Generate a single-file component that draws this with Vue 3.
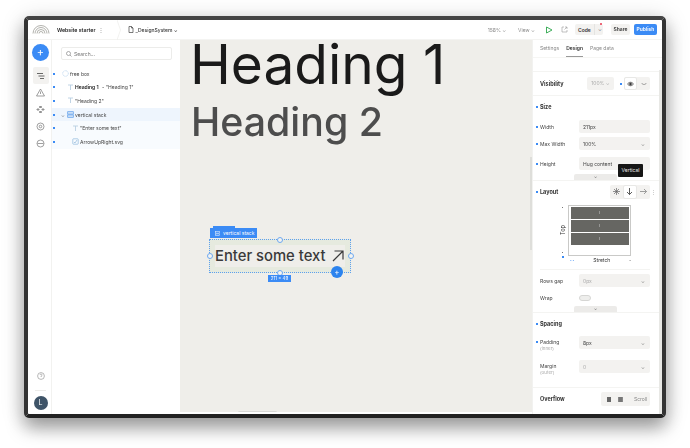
<script setup>
const tree = [
  { cls: 'l0', icon: 'circle', html: 'free box' },
  { cls: 'l1', icon: 't', strong: 'Heading 1', text: ' - "Heading 1"' },
  { cls: 'l1', icon: 't', text: '"Heading 2"' },
  { cls: 'l1 sel', icon: 'stack', text: 'vertical stack', caret: true },
  { cls: 'l2 child', icon: 't', text: '"Enter some text"' },
  { cls: 'l2 child', icon: 'svg', text: 'ArrowUpRight.svg' }
]
</script>

<template>
  <div class="page">
    <div class="window">
      <header class="topbar">
        <svg class="logo" width="18" height="10" viewBox="0 0 18 10" fill="none" stroke="#a9a9a4" stroke-width=".9">
          <path d="M1 9.500a8 8 0 0 1 16 0M3 9.500a6 6 0 0 1 12 0M5 9.500a4 4 0 0 1 8 0M7 9.500a2 2 0 0 1 4 0" />
        </svg>
        <span class="project">Website starter</span>
        <span class="dots">⋮</span>
        <svg class="chev" width="4" height="20" viewBox="0 0 4 20" fill="none" stroke="#ececea" stroke-width=".7"><path d="M0 0l3.500 10L0 20" /></svg>
        <svg class="file" width="6" height="7" viewBox="0 0 6 7" fill="none" stroke="#444" stroke-width=".7"><path d="M1 .5h2.500L5 2v4.500H1zM3.500.5V2H5" /></svg>
        <span class="page-name">_DesignSystem ⌄</span>
        <span class="grow"></span>
        <span class="muted">158% ⌄</span>
        <span class="muted view">View ⌄</span>
        <svg class="play" width="8" height="8" viewBox="0 0 8 8" fill="none" stroke="#3fae5b" stroke-width="1"><path d="M1.500 1v6L7 4z" /></svg>
        <svg class="ext" width="7" height="7" viewBox="0 0 7 7" fill="none" stroke="#999" stroke-width=".6"><path d="M3 1H1v5h5V4M4 1h2v2M6 1L3.500 3.500" /></svg>
        <span class="code"><b>Code</b><i>⌄</i><em></em></span>
        <span class="btn">Share</span>
        <span class="btn publish">Publish</span>
      </header>

      <div class="body">
        <nav class="rail">
          <span class="add">+</span>
          <span class="rail-btn on">
            <svg width="8" height="8" viewBox="0 0 8 8" stroke="#444" stroke-width=".8"><path d="M0 1.500h6M1.500 4h6M3 6.500h4" /></svg>
          </span>
          <span class="rail-btn">
            <svg width="9" height="9" viewBox="0 0 9 9" fill="none" stroke="#777" stroke-width=".7"><path d="M4.500 1L8.500 8h-8zM4.500 3.500v2.500" /></svg>
          </span>
          <span class="rail-btn">
            <svg width="9" height="9" viewBox="0 0 9 9" fill="none" stroke="#777" stroke-width=".8"><path d="M3.500 1.500h2v1h-2zM1 4h2v1H1zM6 4h2v1H6zM3.500 6.500h2v1h-2z" /></svg>
          </span>
          <span class="rail-btn">
            <svg width="9" height="9" viewBox="0 0 9 9" fill="none" stroke="#777" stroke-width=".7"><circle cx="4.500" cy="4.500" r="3.500" /><circle cx="4.500" cy="4.500" r="1.300" /></svg>
          </span>
          <span class="rail-btn">
            <svg width="9" height="9" viewBox="0 0 9 9" fill="none" stroke="#777" stroke-width=".7"><circle cx="4.500" cy="4.500" r="3.500" /><path d="M1.500 4.500h6" /></svg>
          </span>
          <span class="grow"></span>
          <svg class="help" width="8" height="8" viewBox="0 0 8 8" fill="none" stroke="#999" stroke-width=".7"><circle cx="4" cy="4" r="3.400" /><path d="M3 3a1 1 0 1 1 1.300 1L4 5" /></svg>
          <span class="rail-sep"></span>
          <span class="avatar">L</span>
        </nav>

        <aside class="tree">
          <div class="search">
            <svg width="6" height="6" viewBox="0 0 6 6" fill="none" stroke="#888" stroke-width=".7"><circle cx="2.500" cy="2.500" r="2" /><path d="M4 4l1.500 1.500" /></svg>
            <span>Search...</span>
          </div>
          <div class="rows">
            <div v-for="row in tree" :key="row.text || row.html" class="row" :class="row.cls">
              <span class="mark"></span>
              <span v-if="row.caret" class="caret">⌄</span>
              <svg v-if="row.icon === 'circle'" class="ic" width="7" height="7" viewBox="0 0 7 7" fill="none" stroke="#b7d4ef" stroke-width=".8" stroke-dasharray="1 .5"><circle cx="3.500" cy="3.500" r="2.800" /></svg>
              <svg v-else-if="row.icon === 't'" class="ic" width="7" height="7" viewBox="0 0 7 7" fill="none" stroke="#b9cfe2" stroke-width=".9"><path d="M1 1h5M3.500 1v5" /></svg>
              <svg v-else-if="row.icon === 'stack'" class="ic" width="7" height="7" viewBox="0 0 7 7" fill="#cfe2f7" stroke="#5a9bea" stroke-width=".7"><rect x=".7" y=".7" width="5.600" height="2.400" /><rect x=".7" y="3.900" width="5.600" height="2.400" /></svg>
              <svg v-else class="ic" width="7" height="7" viewBox="0 0 7 7" fill="none" stroke="#8fb8dc" stroke-width=".7"><rect x=".8" y=".8" width="5.400" height="5.400" rx=".6" /><path d="M2 4l1 1 2-3" /></svg>
              <span class="label"><b v-if="row.strong">{{ row.strong }}</b>{{ row.text || row.html }}</span>
            </div>
          </div>
        </aside>

        <main class="canvas">
          <div class="h1">Heading 1</div>
          <div class="h2">Heading 2</div>

          <div class="stack">
            <div class="stack-tab"></div>
            <div class="stack-tag">
              <svg width="5" height="5" viewBox="0 0 5 5" fill="none" stroke="#fff" stroke-width=".6" opacity=".8"><rect x=".4" y=".4" width="4.200" height="1.700" /><rect x=".4" y="2.900" width="4.200" height="1.700" /></svg>
              vertical stack
            </div>
            <div class="stack-inner">
              <span class="enter">Enter some text</span>
              <svg class="arrow" width="12" height="12" viewBox="0 0 12 12" fill="none" stroke="#3a3a3a" stroke-width="1.200"><path d="M1 11L11 1M2.500 1H11v8.500" /></svg>
            </div>
            <i class="handle top"></i><i class="handle bottom"></i><i class="handle left"></i><i class="handle right"></i>
            <span class="plus">+</span>
            <span class="dims">211 × 49</span>
          </div>
          <div class="h-scroll"></div>
          <div class="v-scroll"></div>
        </main>

        <aside class="panel">
          <div class="tabs">
            <span>Settings</span><span class="active">Design</span><span>Page data</span>
          </div>
          <div class="panel-scroll">
            <section class="sec vis">
              <strong class="title">Visibility</strong>
              <span class="grow"></span>
              <span class="pill faded">100% ⌄</span>
              <span class="mark"></span>
              <span class="seg">
                <span class="seg-on">
                  <svg width="7" height="6" viewBox="0 0 7 6" fill="none" stroke="#333" stroke-width=".7"><path d="M.5 3C2 .7 5 .7 6.500 3 5 5.300 2 5.300.5 3z" /><circle cx="3.500" cy="3" r="1" fill="#333" /></svg>
                </span>
                <span class="seg-off">
                  <svg width="6" height="4" viewBox="0 0 6 4" fill="none" stroke="#777" stroke-width=".7"><path d="M.5 1c1.500 2 3.500 2 5 0" /></svg>
                </span>
              </span>
            </section>

            <section class="sec size">
              <div class="head"><span class="mark"></span><strong class="title">Size</strong></div>
              <div class="prop"><span class="mark"></span><label>Width</label><span class="field">211px</span></div>
              <div class="prop"><span class="mark"></span><label>Max Width</label><span class="field">100%<i>⌄</i></span></div>
              <div class="prop third"><span class="mark"></span><label>Height</label><span class="field">Hug content</span></div>
              <div class="more"><span>⌄</span></div>
              <div class="tip">Vertical</div>
            </section>

            <section class="sec layout">
              <div class="head between">
                <span class="head-l"><span class="mark"></span><strong class="title">Layout</strong></span>
                <span class="dir">
                  <span class="dir-btn">
                    <svg width="7" height="7" viewBox="0 0 7 7" stroke="#666" stroke-width=".7"><path d="M3.500 0v7M0 3.500h7M1 1l5 5M6 1L1 6" /></svg>
                  </span>
                  <span class="dir-btn on">
                    <svg width="7" height="7" viewBox="0 0 7 7" fill="none" stroke="#333" stroke-width=".8"><path d="M3.500 0v6.500M1 4l2.500 2.500L6 4" /></svg>
                  </span>
                  <span class="dir-btn">
                    <svg width="7" height="7" viewBox="0 0 7 7" fill="none" stroke="#888" stroke-width=".8"><path d="M0 3.500h6.500M4 1l2.500 2.500L4 6" /></svg>
                  </span>
                </span>
                <span class="vdots">⋮</span>
              </div>
              <div class="align">
                <span class="top-lab">Top</span>
                <i class="tick t1"></i><i class="tick t2"></i><i class="tick t3"></i>
                <div class="align-box">
                  <div class="bar">ı</div><div class="bar">ı</div><div class="bar">ı</div>
                </div>
              </div>
              <div class="stretch"><span class="marks">▪ ▪</span><span>Stretch</span><span class="dot">▪</span></div>
              <div class="rule"></div>
              <div class="prop"><label>Rows gap</label><span class="field dim">0px<i>⌄</i></span></div>
              <div class="prop"><label>Wrap</label><span class="toggle"></span></div>
              <div class="more"><span>⌄</span></div>
            </section>

            <section class="sec spacing">
              <div class="head"><span class="mark"></span><strong class="title">Spacing</strong></div>
              <div class="prop tall"><span class="mark"></span><label>Padding<small>(inner)</small></label><span class="field">8px<i>⌄</i></span></div>
              <div class="prop tall"><label>Margin<small>(outer)</small></label><span class="field dim">0<i>⌄</i></span></div>
            </section>

            <section class="sec overflow">
              <strong class="title">Overflow</strong>
              <span class="over">
                <span class="ov-ic"></span><span class="ov-ic b"></span><span class="scroll">Scroll</span>
              </span>
            </section>
          </div>
          <div class="scrollbar"></div>
        </aside>
      </div>
    </div>
  </div>
</template>

<style scoped>
.page {
  width: 690px;
  height: 448px;
  background: #fff;
  padding: 16px 24px 30px;
  box-sizing: border-box;
  font-family: Inter, "Liberation Sans", sans-serif;
  color: #333;
  overflow: hidden;
}
.window {
  height: 401.500px;
  box-sizing: border-box;
  border: solid #333;
  border-width: 4.500px 4px 4.500px 4px;
  border-top-color: #444;
  border-bottom-color: #222;
  border-radius: 5px;
  background: #fff;
  overflow: hidden;
  display: flex;
  flex-direction: column;
  box-shadow: 0 10px 18px rgba(0, 0, 0, .34), 0 3px 24px rgba(0, 0, 0, .16);
  filter: blur(.25px);
}
.grow { flex: 1; }
.topbar {
  height: 20px;
  flex: none;
  display: flex;
  align-items: center;
  font-size: 5px;
  border-bottom: 1px solid #f4f4f2;
  box-sizing: border-box;
}
.logo { margin-left: 4px; margin-bottom: 1px; flex: none; }
.project { margin-left: 7px; font-size: 5.200px; font-weight: 600; color: #222; }
.dots { margin-left: 3px; color: #999; font-size: 6px; }
.chev { margin-left: 13px; flex: none; }
.file { margin-left: 7px; flex: none; }
.page-name { margin-left: 1px; color: #333; font-weight: 500; }
.muted { color: #8a8a8a; }
.view { margin-left: 12px; }
.play { margin-left: 10px; }
.ext { margin-left: 8px; }
.code {
  margin-left: 7px;
  width: 28px;
  height: 11px;
  border-radius: 2px;
  background: #f3f2f0;
  display: flex;
  align-items: center;
  position: relative;
}
.code b { margin-left: 3px; font-weight: 600; width: 16px; }
.code i { font-style: normal; color: #666; border-left: 1px solid #e4e4e2; padding-left: 3px; line-height: 11px; }
.code em { position: absolute; right: 1px; top: -1px; width: 2px; height: 2px; border-radius: 50%; background: #e8384f; }
.btn {
  margin-left: 8px;
  height: 11px;
  width: 19px;
  text-align: center;
  border-radius: 2px;
  background: #f3f2f0;
  line-height: 11px;
  font-weight: 600;
}
.publish {
  margin-left: 4px;
  margin-right: 5px;
  width: 23px;
  background: #3b8bf5;
  color: #fff;
}
.body { flex: 1; display: flex; min-height: 0; }
.rail {
  width: 24px;
  flex: none;
  border-right: 1px solid #f2f2f0;
  box-sizing: border-box;
  display: flex;
  flex-direction: column;
  align-items: center;
  padding: 4px 0 4px;
}
.add {
  width: 17px;
  height: 17px;
  margin-left: 2px;
  flex: none;
  border-radius: 50%;
  background: #3b8bf5;
  color: #fff;
  font-size: 11px;
  line-height: 16px;
  text-align: center;
}
.rail-btn {
  width: 16px;
  height: 17px;
  margin-left: 2px;
  flex: none;
  display: flex;
  align-items: center;
  justify-content: center;
  border-radius: 2px;
}
.rail-btn.on { margin-top: 6px; background: #f3f2f0; }
.help { margin-bottom: 10px; margin-left: 2px; }
.rail-sep { width: 11px; height: 1px; background: #ececea; margin-bottom: 5px; margin-left: 2px; }
.avatar {
  width: 14px;
  height: 14px;
  margin-left: 2px;
  border-radius: 50%;
  background: #3f5468;
  color: #fff;
  font-size: 7px;
  line-height: 14px;
  text-align: center;
}
.tree { width: 128px; flex: none; }
.search {
  margin: 7px 8px 0 9px;
  height: 13px;
  box-sizing: border-box;
  border: 1px solid #ececea;
  border-radius: 2px;
  display: flex;
  align-items: center;
  gap: 2px;
  padding-left: 4px;
  font-size: 5px;
  color: #777;
}
.rows { margin-top: 7px; }
.row {
  height: 13.600px;
  display: flex;
  align-items: center;
  font-size: 5px;
  color: #444;
  position: relative;
}
.row b { font-weight: 600; margin-right: 2px; color: #222; }
.mark { width: 2px; height: 2px; background: #3b8bf5; flex: none; }
.row > .mark { position: absolute; left: 1px; }
.ic { flex: none; margin-right: 1px; }
.l0 { padding-left: 10px; }
.l1 { padding-left: 15px; }
.l2 { padding-left: 20px; }
.sel { background: #eef5fd; }
.child { background: #f8fbfe; }
.caret { position: absolute; left: 9px; color: #777; font-size: 5px; }
.canvas {
  flex: 1;
  min-width: 0;
  background: #efeeea;
  position: relative;
  overflow: hidden;
  margin-bottom: 2px;
}
.h1 {
  font-size: 55px;
  line-height: 60px;
  margin: -6px 0 0 10px;
  color: #1a1a1a;
  white-space: nowrap;
}
.h2 {
  font-size: 39.300px;
  line-height: 50px;
  margin: 3px 0 0 11px;
  color: #4d4d4d;
  font-weight: 500;
  white-space: nowrap;
}
.stack {
  position: absolute;
  left: 29px;
  top: 199px;
  width: 142px;
  height: 34px;
  box-sizing: border-box;
  border: 1px dotted #5da0ef;
  background: #e6eadf;
  padding: 5px;
}
.stack-tab { position: absolute; left: 3px; top: -14px; width: 22px; height: 2px; background: #3b8bf5; }
.stack-tag {
  position: absolute;
  left: 0;
  top: -12px;
  height: 10px;
  width: 47px;
  background: #3b8bf5;
  color: #fff;
  font-size: 5px;
  display: flex;
  align-items: center;
  gap: 3px;
  padding-left: 5px;
  box-sizing: border-box;
}
.stack-inner {
  height: 100%;
  background: #efeeea;
  display: flex;
  align-items: center;
  justify-content: space-between;
}
.enter { font-size: 14.800px; font-weight: 500; color: #3a3a3a; white-space: nowrap; }
.arrow { margin-right: 1px; }
.handle {
  position: absolute;
  width: 4px;
  height: 4px;
  border: 1px solid #6ea8f0;
  border-radius: 50%;
  background: #f4f4f1;
}
.handle.top { left: 67px; top: -3.500px; }
.handle.bottom { left: 67px; bottom: -3.500px; }
.handle.left { left: -3.500px; top: 13px; }
.handle.right { right: -3.500px; top: 13px; }
.plus {
  position: absolute;
  right: 7px;
  bottom: -6px;
  width: 12px;
  height: 12px;
  border-radius: 50%;
  background: #2c83ee;
  color: #fff;
  font-size: 8px;
  line-height: 12px;
  text-align: center;
}
.dims {
  position: absolute;
  left: 58px;
  bottom: -10px;
  height: 7px;
  width: 23px;
  background: #3b8bf5;
  color: #fff;
  font-size: 4.500px;
  line-height: 7px;
  text-align: center;
}
.h-scroll {
  position: absolute;
  left: 58px;
  bottom: -2px;
  width: 39px;
  height: 3px;
  border-radius: 2px;
  background: #d9d9d6;
}
.v-scroll {
  position: absolute;
  right: 0;
  top: 117px;
  width: 2px;
  height: 93px;
  background: #dededa;
}
.panel {
  width: 130px;
  flex: none;
  position: relative;
  border-left: 1px solid #f2f2f0;
  box-sizing: border-box;
  font-size: 5px;
  color: #444;
  display: flex;
  flex-direction: column;
}
.tabs {
  height: 18px;
  flex: none;
  display: flex;
  gap: 7px;
  padding: 4px 0 0 7px;
  box-sizing: border-box;
  color: #888;
  border-bottom: 1px solid #f6f6f4;
}
.tabs span { height: 13px; line-height: 9px; }
.tabs .active { color: #333; font-weight: 600; border-bottom: 1px solid #999; box-sizing: border-box; }
.panel-scroll { flex: 1; padding-top: 13px; overflow: hidden; padding-right: 3px; min-height: 0; }
.sec { padding: 0 9px 0 7px; position: relative; border-bottom: 1px solid #f4f4f2; box-sizing: border-box; }
.sec:first-child { border-top: 1px solid #f4f4f2; }
.title { font-size: 5.500px; font-weight: 700; color: #333; }
.vis { height: 25px; display: flex; align-items: center; gap: 6px; }
.pill { height: 13px; width: 27px; background: #f3f2f0; border-radius: 2px; line-height: 13px; text-align: center; }
.faded { color: #aaa; }
.seg {
  width: 26px;
  height: 13px;
  background: #f3f2f0;
  border-radius: 2px;
  display: flex;
  margin-left: -4px;
}
.seg-on { width: 13px; background: #fff; border: 1px solid #e8e8e6; border-radius: 2px; box-sizing: border-box; display: flex; align-items: center; justify-content: center; }
.seg-off { flex: 1; display: flex; align-items: center; justify-content: center; }
.head { height: 22px; display: flex; align-items: center; position: relative; }
.head .mark, .prop > .mark { position: absolute; left: -4px; }
.head-l { display: flex; align-items: center; }
.between { justify-content: space-between; }
.size { height: 85px; }
.prop { display: flex; align-items: center; height: 17px; position: relative; }
.prop.third { margin-top: 3px; }
.prop label { width: 39px; flex: none; color: #444; }
.prop small { display: block; font-size: 4.500px; color: #aaa; margin-top: 1px; }
.field {
  flex: 1;
  height: 13px;
  background: #f3f2f0;
  border-radius: 2px;
  display: flex;
  align-items: center;
  justify-content: space-between;
  padding: 0 5px 0 4px;
  color: #444;
}
.field i { font-style: normal; color: #777; }
.field.dim { color: #aaa; }
.more {
  position: absolute;
  bottom: 0;
  left: 41px;
  width: 43px;
  height: 6px;
  background: #ecebe9;
  border-radius: 2px 2px 0 0;
  text-align: center;
  font-size: 4px;
  line-height: 5px;
  color: #555;
  overflow: hidden;
}
.tip {
  position: absolute;
  right: 16px;
  top: 68px;
  width: 25px;
  height: 13px;
  background: #161616;
  color: #eee;
  font-size: 5px;
  line-height: 13px;
  text-align: center;
  border-radius: 1px;
  z-index: 2;
}
.layout { height: 132px; }
.layout .head { height: 21px; }
.dir { display: flex; height: 14px; width: 40px; background: #f3f2f0; border-radius: 2px; margin-left: auto; }
.dir-btn { width: 13.300px; display: flex; align-items: center; justify-content: center; box-sizing: border-box; }
.dir-btn.on { background: #fff; border: 1px solid #e8e8e6; border-radius: 2px; }
.vdots { position: absolute; right: -6px; color: #aaa; }
.align { display: flex; margin: 3px 0 0 28px; position: relative; }
.top-lab { position: absolute; left: -10px; top: 22px; transform: rotate(-90deg); color: #333; font-size: 5.500px; }
.tick { position: absolute; left: -6px; width: 1px; height: 1px; background: #777; }
.t1 { top: 2px; }
.t2 { top: 47px; }
.t3 { top: 51px; left: -6px; width: 2px; height: 2px; background: #3b8bf5; }
.align-box {
  width: 63px;
  height: 51px;
  border: 1px solid #c9c9c7;
  box-sizing: border-box;
  padding: 1px 1.500px;
  display: flex;
  flex-direction: column;
  gap: 1.500px;
}
.bar { height: 11.500px; background: #666662; color: #ddd; font-size: 4px; line-height: 11px; text-align: center; flex: none; }
.stretch { display: flex; justify-content: space-between; padding: 0 19px 0 30px; height: 8px; line-height: 8px; color: #333; }
.marks { color: #3b8bf5; font-size: 3px; }
.dot { font-size: 3px; color: #555; }
.rule { height: 1px; background: #f4f4f2; margin: 5px 0 2px; }
.toggle { width: 12px; height: 6px; border: 1px solid #d6d6d4; border-radius: 4px; background: #eeeeec; box-sizing: border-box; }
.spacing { height: 75px; }
.spacing .head { height: 21px; margin-bottom: 2px; }
.tall { height: 24px; align-items: flex-start; }
.tall .mark { top: 5px; }
.tall label { padding-top: 3px; }
.overflow { height: 26px; border-bottom: 0; display: flex; align-items: center; justify-content: space-between; padding-bottom: 4px; }
.over { width: 49px; height: 14px; border-radius: 2px; background: #f3f2f0; display: flex; align-items: center; padding-left: 6px; box-sizing: border-box; gap: 7px; color: #888; }
.ov-ic { width: 4px; height: 5px; background: #666; }
.ov-ic.b { border-left: 1px solid #888; border-right: 1px solid #888; width: 3px; background: #777; }
.scroll { margin-left: 4px; }
.scrollbar { position: absolute; right: 0; top: 30px; width: 3px; bottom: 0; background: #e8e8e5; }
</style>
